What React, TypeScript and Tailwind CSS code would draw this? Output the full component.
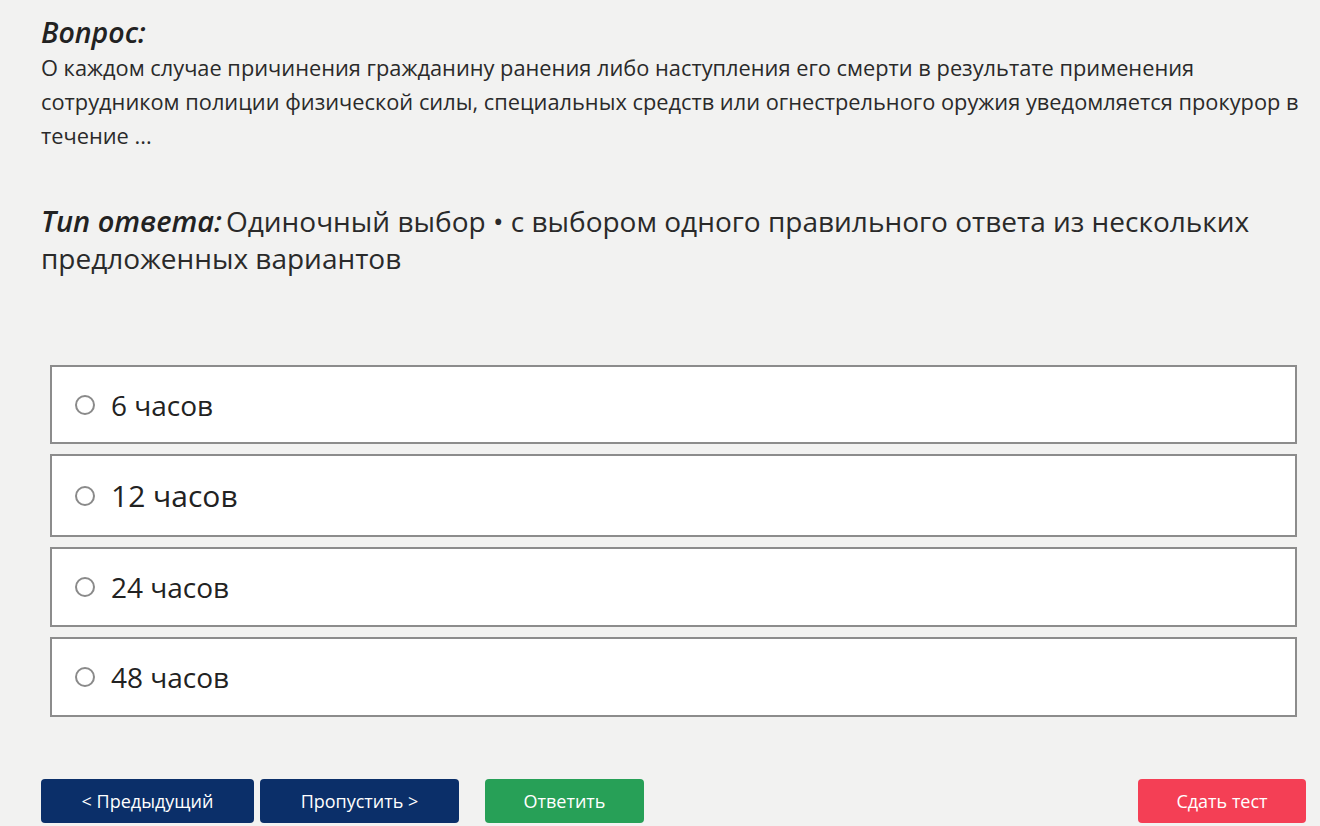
const options = [
  { label: '6 часов', h: 'h-[79px]', text: 'text-[28px]' },
  { label: '12 часов', h: 'h-[83px]', text: 'text-[30px]' },
  { label: '24 часов', h: 'h-[80px]', text: 'text-[28px]' },
  { label: '48 часов', h: 'h-[80px]', text: 'text-[28px]' },
]

export default function App() {
  return (
    <div className="min-h-[826px] bg-[#f2f2f1] pl-[41px] pr-[8px] pt-[13px] font-['Open_Sans','Noto_Sans',sans-serif] text-[#222222]">
      <div className="text-[28.5px] font-semibold italic leading-[38px]">Вопрос:</div>
      <p className="text-[21.8px] leading-[34px] text-[#2a2a2a]">
        О каждом случае причинения гражданину ранения либо наступления его смерти в результате применения
        сотрудником полиции физической силы, специальных средств или огнестрельного оружия уведомляется прокурор в
        течение ...
      </p>

      <div className="mt-[49px] pr-[6px] text-[28px] leading-[37px] text-[#2a2a2a]">
        <span className="mr-[4px] text-[29px] font-semibold italic leading-[37px] text-[#222222]">Тип ответа:</span>
        Одиночный выбор • с выбором одного правильного ответа из нескольких предложенных вариантов
      </div>

      <div className="ml-[9px] mr-[15px] mt-[88px] flex flex-col gap-[10px]">
        {options.map((o) => (
          <label
            key={o.label}
            className={`flex ${o.h} items-center border-2 border-[#8c8c8c] bg-white pl-[23px]`}
          >
            <span className="h-[20px] w-[20px] shrink-0 rounded-full border-2 border-[#8a8a8a] bg-white" />
            <span className={`ml-[16px] ${o.text} text-[#222222]`}>{o.label}</span>
          </label>
        ))}
      </div>

      <div className="mr-[6px] mt-[62px] flex items-center pb-[4px] text-[18px] text-white">
        <button className="h-[44px] w-[213px] rounded-[4px] bg-[#0b2f69]">&lt; Предыдущий</button>
        <button className="ml-[6px] h-[44px] w-[199px] rounded-[4px] bg-[#0b2f69]">Пропустить &gt;</button>
        <button className="ml-[26px] h-[44px] w-[159px] rounded-[4px] bg-[#27a057]">Ответить</button>
        <button className="ml-auto h-[44px] w-[168px] rounded-[4px] bg-[#f43f55]">Сдать тест</button>
      </div>
    </div>
  )
}
